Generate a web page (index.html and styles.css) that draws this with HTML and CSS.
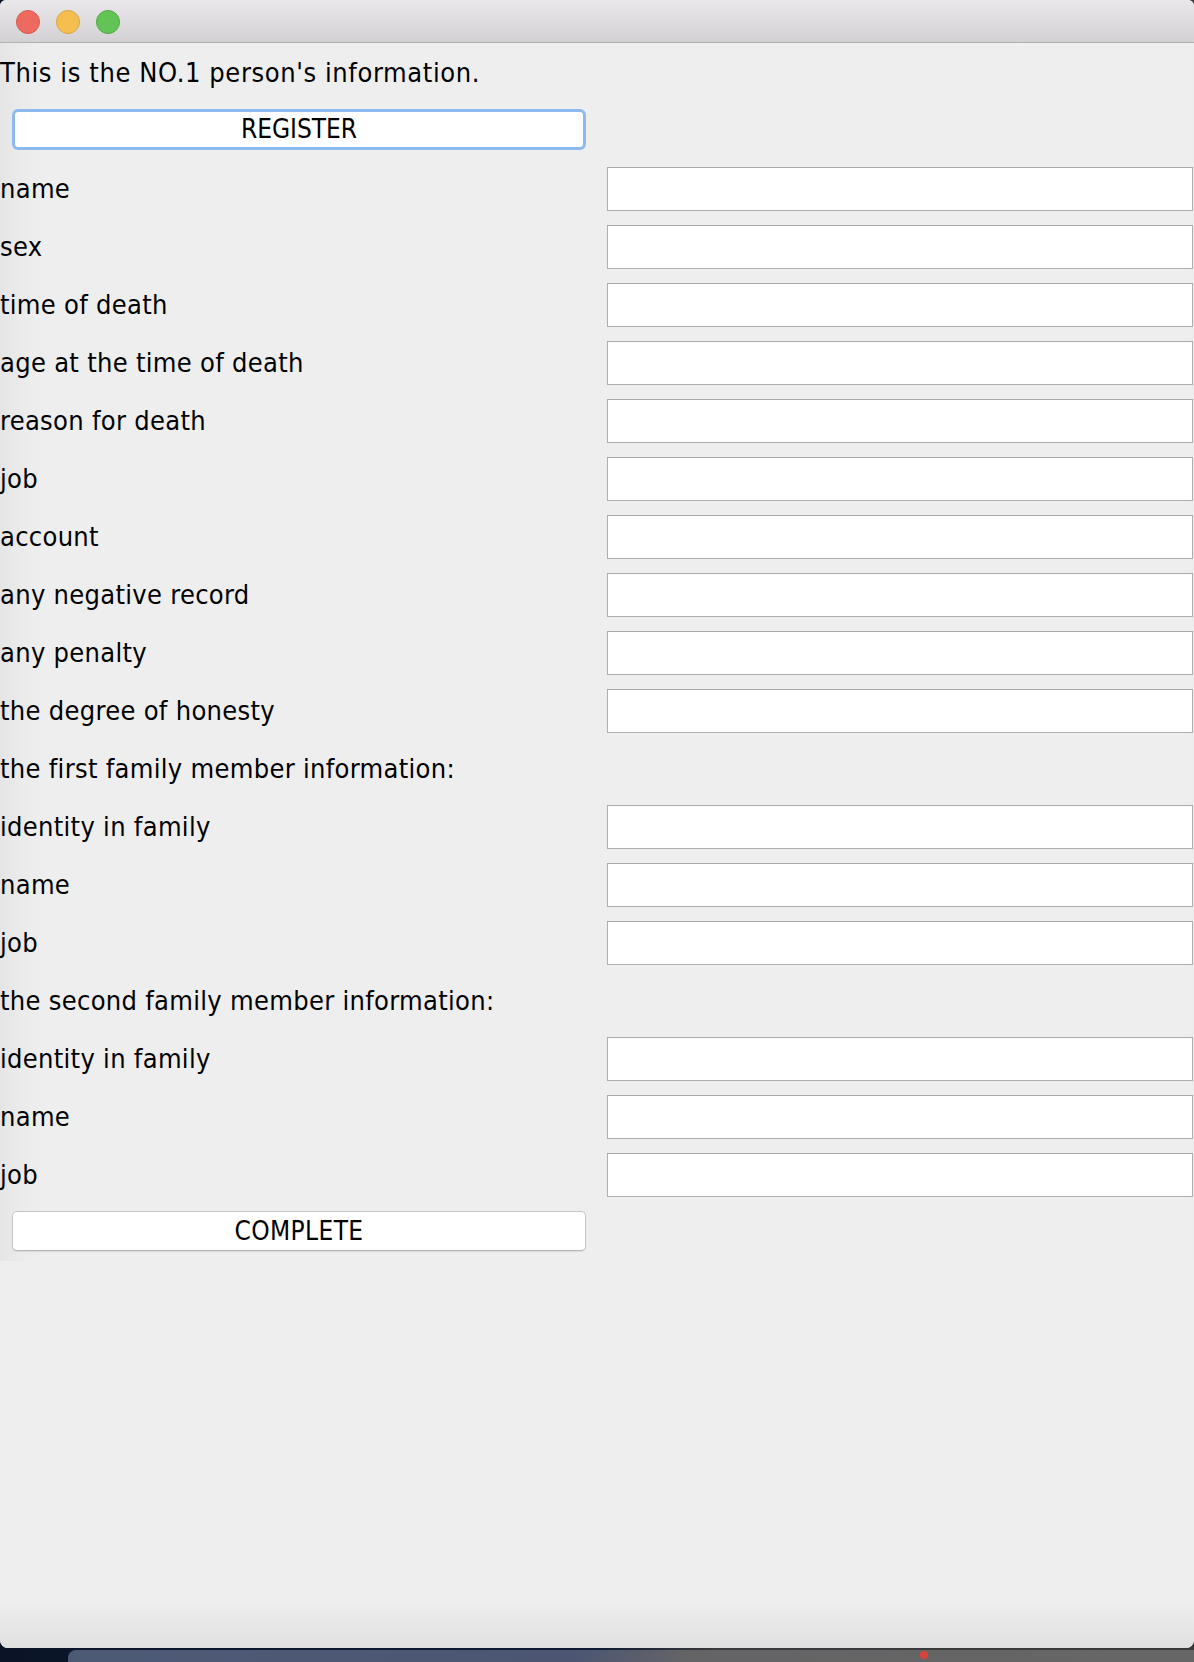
FILE: index.html
```html
<!DOCTYPE html>
<html>
<head>
<meta charset="utf-8">
<link rel="stylesheet" href="styles.css">
</head>
<body>
<div class="window">
  <div class="titlebar">
    <span class="light red"></span>
    <span class="light yellow"></span>
    <span class="light green"></span>
  </div>
  <div class="form">
    <div class="label heading">This is the NO.1 person's information.</div>
    <div class="cell"></div>
    <div class="cell"><button class="btn btn-focus">REGISTER</button></div>
    <div class="cell"></div>

    <div class="label">name</div><div class="cell"><input class="field" type="text"></div>
    <div class="label">sex</div><div class="cell"><input class="field" type="text"></div>
    <div class="label">time of death</div><div class="cell"><input class="field" type="text"></div>
    <div class="label">age at the time of death</div><div class="cell"><input class="field" type="text"></div>
    <div class="label">reason for death</div><div class="cell"><input class="field" type="text"></div>
    <div class="label">job</div><div class="cell"><input class="field" type="text"></div>
    <div class="label">account</div><div class="cell"><input class="field" type="text"></div>
    <div class="label">any negative record</div><div class="cell"><input class="field" type="text"></div>
    <div class="label">any penalty</div><div class="cell"><input class="field" type="text"></div>
    <div class="label">the degree of honesty</div><div class="cell"><input class="field" type="text"></div>

    <div class="label">the first family member information:</div><div class="cell"></div>
    <div class="label">identity in family</div><div class="cell"><input class="field" type="text"></div>
    <div class="label">name</div><div class="cell"><input class="field" type="text"></div>
    <div class="label">job</div><div class="cell"><input class="field" type="text"></div>

    <div class="label">the second family member information:</div><div class="cell"></div>
    <div class="label">identity in family</div><div class="cell"><input class="field" type="text"></div>
    <div class="label">name</div><div class="cell"><input class="field" type="text"></div>
    <div class="label">job</div><div class="cell"><input class="field" type="text"></div>

    <div class="cell"><button class="btn btn-wide">COMPLETE</button></div>
    <div class="cell"></div>
  </div>
  <div class="spacer"></div>
</div>
<div class="desktop">
  <div class="dock">
    <span class="dock-dot"></span>
  </div>
</div>
</body>
</html>
```
FILE: styles.css
```css
html, body {
  margin: 0;
  padding: 0;
}
body {
  width: 1194px;
  height: 1662px;
  overflow: hidden;
  background: linear-gradient(90deg, #0b1427 0%, #0f1b33 50%, #3a3a3c 60%, #3a3a3c 100%);
  font-family: "DejaVu Sans Condensed", "DejaVu Sans", sans-serif;
  font-stretch: condensed;
  color: #000;
}
.window {
  height: 1648px;
  background: #eeeeee;
  border-radius: 6px 6px 8px 8px;
  display: flex;
  flex-direction: column;
  overflow: hidden;
  box-shadow: inset 0 -40px 40px -30px rgba(0,0,0,0.08), inset 60px 0 40px -50px rgba(0,0,0,0.05);
}
.titlebar {
  height: 42px;
  border-bottom: 1px solid #b2b0b2;
  background: linear-gradient(#e9e7e9, #d3d1d3);
  display: flex;
  align-items: center;
  padding-left: 16px;
  gap: 16px;
  flex: none;
}
.light {
  width: 24px;
  height: 24px;
  border-radius: 50%;
  box-sizing: border-box;
  margin-top: 1px;
}
.red { background: #ee6a5f; border: 1px solid #d55a50; }
.yellow { background: #f5be4f; border: 1px solid #d9a441; }
.green { background: #61c454; border: 1px solid #52a843; }

.form {
  display: grid;
  grid-template-columns: 597px 597px;
  grid-auto-rows: 58px;
  flex: none;
}
.label {
  display: flex;
  align-items: center;
  font-size: 27px;
  white-space: nowrap;
  padding-top: 1px;
  letter-spacing: 0.3px;
}
.heading {
  letter-spacing: 0.6px;
}
.cell {
  display: flex;
  align-items: flex-start;
}
.field {
  margin: 8px 1px 0 10px;
  width: 586px;
  height: 44px;
  box-sizing: border-box;
  border: 1px solid #aeaeae;
  border-top-color: #a8a8a8;
  background: #ffffff;
  padding: 0;
  outline: none;
}
.btn {
  margin: 8px 0 0 12px;
  width: 574px;
  height: 40px;
  box-sizing: border-box;
  background: #ffffff;
  border: 1px solid #c6c6c6;
  border-bottom-color: #b4b4b4;
  border-radius: 5px;
  box-shadow: 0 1px 1px rgba(0,0,0,0.08);
  font-family: "DejaVu Sans Condensed", "DejaVu Sans", sans-serif;
  font-stretch: condensed;
  font-size: 26px;
  color: #000;
  padding: 0;
  line-height: 36px;
}
.btn-wide {
  letter-spacing: 0.4px;
}
.btn-focus {
  margin-top: 8px;
  height: 41px;
  border: 3px solid #8db9ef;
  border-radius: 6px;
  box-shadow: none;
  line-height: 33px;
}
.spacer {
  flex: 1;
  background: linear-gradient(#eeeeee 0%, #eeeeee 88%, #e0e0e0 100%);
}
.desktop {
  height: 14px;
  padding-top: 2px;
  padding-left: 68px;
  box-sizing: border-box;
}
.dock {
  height: 12px;
  border-radius: 8px 0 0 0;
  background: linear-gradient(90deg, #4d5a76 0%, #4c5673 45%, #646466 55%, #666666 100%);
  position: relative;
}
.dock-dot {
  position: absolute;
  left: 852px;
  top: 1px;
  width: 8px;
  height: 8px;
  border-radius: 50%;
  background: #d9443a;
}
```
